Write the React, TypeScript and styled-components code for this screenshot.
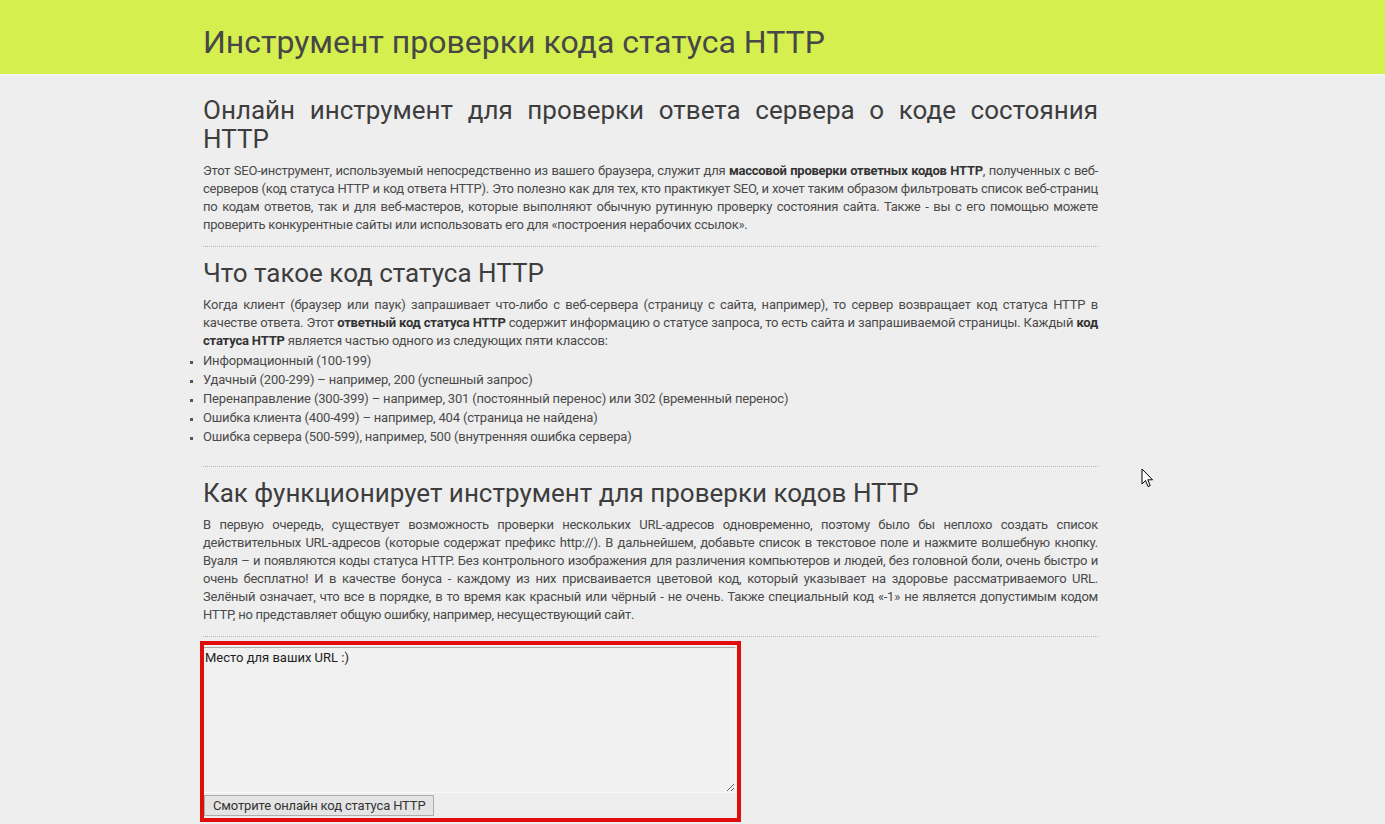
import React from "react";
import styled, { createGlobalStyle } from "styled-components";

const GlobalStyle = createGlobalStyle`
  body {
    margin: 0;
    background: #eeeeee;
    font-family: Roboto, "Noto Sans", Arial, sans-serif;
    color: #444;
  }
`;

const Header = styled.header`
  background: #d5f04e;
  height: 74px;
  border-bottom: 2px solid #f4f4f4;
  display: flex;
  align-items: center;
`;

const Wrap = styled.div`
  width: 895px;
  margin-left: 203px;
`;

const Title = styled.h1`
  margin: 0;
  font-size: 32px;
  font-weight: 400;
  color: #474747;
  line-height: 1;
  padding-top: 10px;
`;

const Main = styled.main`
  padding-top: 20px;
  padding-bottom: 4px;
`;

const Heading = styled.h2`
  margin: 0 0 8px;
  font-size: 26px;
  font-weight: 400;
  line-height: 29px;
  color: #3d3d3d;
  text-align: justify;
`;

const Text = styled.p<{ $squeeze?: number }>`
  margin: 0 0 12px;
  font-size: 13px;
  line-height: 18px;
  letter-spacing: ${(p) => p.$squeeze ?? -0.18}px;
  text-align: justify;
  color: #4a4a4a;

  b {
    color: #333;
  }
`;

const Divider = styled.hr<{ $top?: number }>`
  border: 0;
  border-top: 1px dotted #b5b5b5;
  margin: ${(p) => p.$top ?? 0}px 0 12px;
`;

const List = styled.ul`
  list-style: square;
  margin: -11px 0 0;
  padding: 0;
  font-size: 13px;
  line-height: 19px;
  letter-spacing: -0.18px;
  color: #4a4a4a;

  li::marker {
    color: #555;
    font-size: 11px;
  }
`;

const Checker = styled.form`
  width: 533px;
  margin-top: -8px;
  margin-left: -3px;
  border: 4px solid #e10d0d;
  padding: 2px 0 2px 0;
  display: flex;
  flex-direction: column;
  gap: 2px;
`;

const UrlBox = styled.textarea`
  box-sizing: border-box;
  width: 532px;
  height: 146px;
  margin: 0;
  padding: 2px 1px;
  border: 0;
  border-top: 1px solid #a9a9a9;
  border-right: 1px solid #fafafa;
  border-bottom: 1px solid #fafafa;
  background: #f1f1f1;
  font-family: Roboto, Arial, sans-serif;
  font-size: 13px;
  line-height: 16px;
  color: #222;
  resize: vertical;
  outline: none;
`;

const Submit = styled.button`
  align-self: flex-start;
  height: 21px;
  padding: 0 8px;
  border: 1px solid #adadad;
  background: #e4e4e4;
  font-family: Roboto, Arial, sans-serif;
  font-size: 13px;
  letter-spacing: -0.15px;
  color: #333;
  cursor: pointer;
`;

const Pointer = styled.svg`
  position: absolute;
  left: 1141px;
  top: 468px;
  pointer-events: none;
`;

const App = () => {
  return (
    <>
      <GlobalStyle />
      <Header>
        <Wrap>
          <Title>Инструмент проверки кода статуса HTTP</Title>
        </Wrap>
      </Header>
      <Main>
        <Wrap>
          <Heading>
            Онлайн инструмент для проверки ответа сервера о коде состояния
            HTTP
          </Heading>
          <Text $squeeze={-0.26}>
            Этот SEO-инструмент, используемый непосредственно из вашего
            браузера, служит для <b>массовой проверки ответных кодов HTTP</b>,
            полученных с веб-серверов (код статуса HTTP и код ответа HTTP). Это
            полезно как для тех, кто практикует SEO, и хочет таким образом
            фильтровать список веб-страниц по кодам ответов, так и для
            веб-мастеров, которые выполняют обычную рутинную проверку состояния
            сайта. Также - вы с его помощью можете проверить конкурентные сайты
            или использовать его для «построения нерабочих ссылок».
          </Text>
          <Divider />

          <Heading>Что такое код статуса HTTP</Heading>
          <Text>
            Когда клиент (браузер или паук) запрашивает что-либо с веб-сервера
            (страницу с сайта, например), то сервер возвращает код статуса HTTP
            в качестве ответа. Этот <b>ответный код статуса HTTP</b> содержит
            информацию о статусе запроса, то есть сайта и запрашиваемой
            страницы. Каждый <b>код статуса HTTP</b> является частью одного из
            следующих пяти классов:
          </Text>
          <List>
            <li>Информационный (100-199)</li>
            <li>Удачный (200-299) – например, 200 (успешный запрос)</li>
            <li>
              Перенаправление (300-399) – например, 301 (постоянный перенос) или
              302 (временный перенос)
            </li>
            <li>Ошибка клиента (400-499) – например, 404 (страница не найдена)</li>
            <li>Ошибка сервера (500-599), например, 500 (внутренняя ошибка сервера)</li>
          </List>
          <Divider $top={20} />

          <Heading>Как функционирует инструмент для проверки кодов HTTP</Heading>
          <Text $squeeze={-0.25}>
            В первую очередь, существует возможность проверки нескольких
            URL-адресов одновременно, поэтому было бы неплохо создать список
            действительных URL-адресов (которые содержат префикс http://). В
            дальнейшем, добавьте список в текстовое поле и нажмите волшебную
            кнопку. Вуаля – и появляются коды статуса HTTP. Без контрольного
            изображения для различения компьютеров и людей, без головной боли,
            очень быстро и очень бесплатно! И в качестве бонуса - каждому из них
            присваивается цветовой код, который указывает на здоровье
            рассматриваемого URL. Зелёный означает, что все в порядке, в то время
            как красный или чёрный - не очень. Также специальный код «-1» не
            является допустимым кодом HTTP, но представляет общую ошибку,
            например, несуществующий сайт.
          </Text>
          <Divider />

          <Checker onSubmit={(e) => e.preventDefault()}>
            <UrlBox defaultValue="Место для ваших URL :)" spellCheck={false} />
            <Submit type="submit">Смотрите онлайн код статуса HTTP</Submit>
          </Checker>
        </Wrap>
      </Main>
      <Pointer width="13" height="21" viewBox="0 0 13 21">
        <path
          d="M1 1 L1 16 L4.5 12.5 L7 18.5 L9.2 17.6 L6.8 11.8 L11.5 11.8 Z"
          fill="#fff"
          stroke="#000"
          strokeWidth="1"
          strokeLinejoin="round"
        />
      </Pointer>
    </>
  );
};

export default App;
